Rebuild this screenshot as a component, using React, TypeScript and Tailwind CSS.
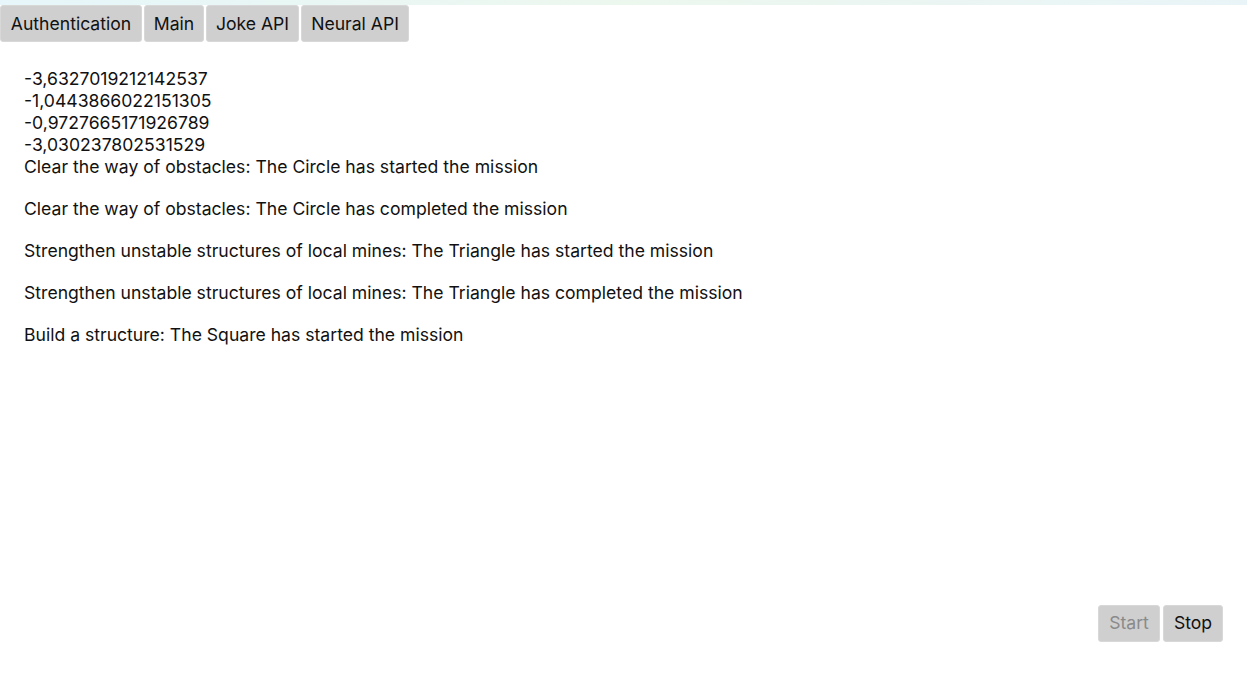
import React from "react";

const tabs = [
  { t: "Authentication", w: "w-[142px]" },
  { t: "Main", w: "w-[60px]" },
  { t: "Joke API", w: "w-[93px]" },
  { t: "Neural API", w: "w-[108px]" },
];
const numbers = [
  "-3,6327019212142537",
  "-1,0443866022151305",
  "-0,9727665171926789",
  "-3,030237802531529",
];
const missions = [
  "Clear the way of obstacles: The Circle has started the mission",
  "Clear the way of obstacles: The Circle has completed the mission",
  "Strengthen unstable structures of local mines: The Triangle has started the mission",
  "Strengthen unstable structures of local mines: The Triangle has completed the mission",
  "Build a structure: The Square has started the mission",
];

export default function App() {
  return (
    <div
      className="w-[1247px] h-[689px] bg-white text-[#111] flex flex-col"
      style={{ fontFamily: "Inter, 'Noto Sans', sans-serif" }}
    >
      <div className="h-[5px] bg-gradient-to-r from-[#e6f6fa] via-[#ecf7ee] to-[#e9f4f8]" />
      <div className="flex gap-[2px] h-[37px]">
        {tabs.map(({ t, w }) => (
          <button
            key={t}
            className={`${w} flex items-center justify-center whitespace-nowrap bg-[#cfcfcf] rounded-[3px] text-[17.6px] leading-none text-[#111] border border-[#d8d8d8]`}
          >
            {t}
          </button>
        ))}
      </div>
      <div className="flex-1 px-[24px] pt-[26px] text-[17.6px] leading-[22px]">
        {numbers.map((n) => (
          <div key={n}>{n}</div>
        ))}
        {missions.map((m) => (
          <p key={m} className="mb-[20px]">
            {m}
          </p>
        ))}
      </div>
      <div className="flex justify-end gap-[3px] pr-[24px] pb-[47px]">
        <button className="h-[37px] w-[62px] flex items-center justify-center bg-[#cfcfcf] rounded-[3px] text-[17.6px] text-[#8a8a8a] border border-[#d8d8d8]">
          Start
        </button>
        <button className="h-[37px] w-[60px] flex items-center justify-center bg-[#cfcfcf] rounded-[3px] text-[17.6px] text-[#111] border border-[#d8d8d8]">
          Stop
        </button>
      </div>
    </div>
  );
}
